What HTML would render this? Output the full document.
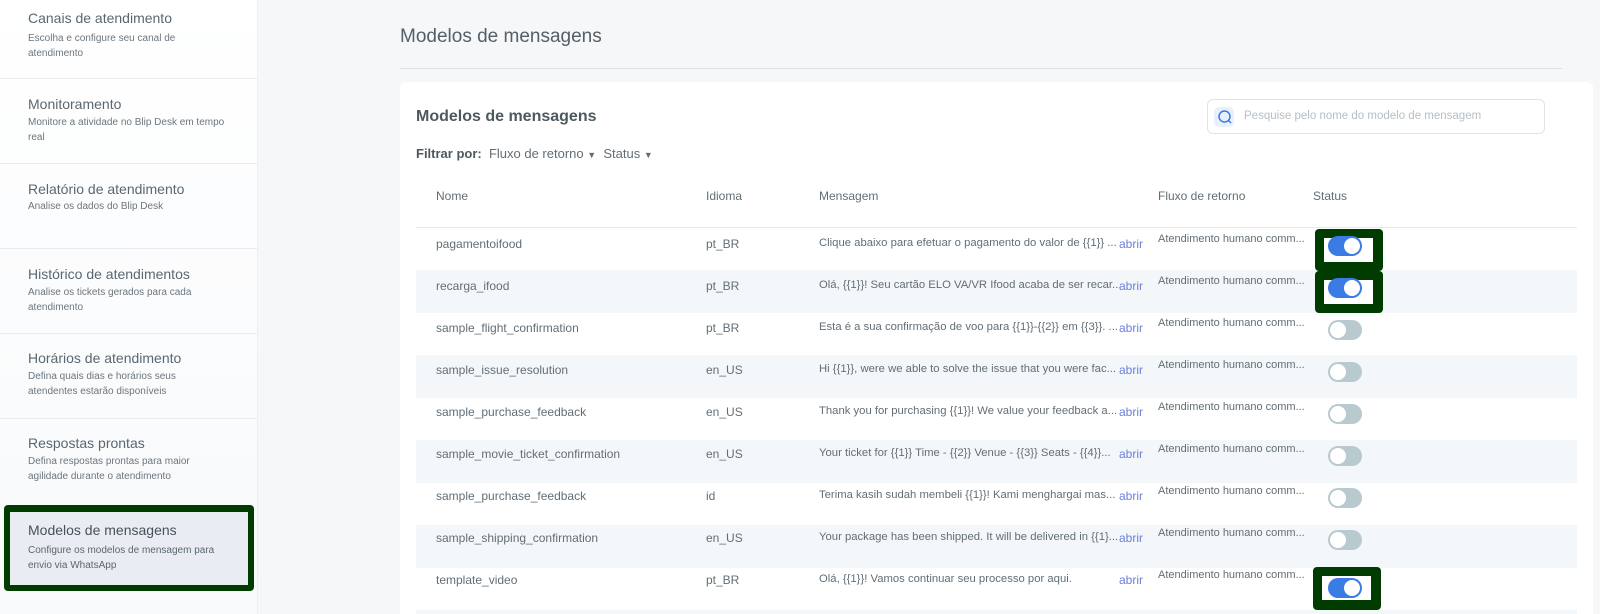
<!DOCTYPE html>
<html><head><meta charset="utf-8"><style>
*{margin:0;padding:0;box-sizing:border-box}
html,body{width:1600px;height:614px;overflow:hidden}
body{background:#f5f7f9;font-family:"Liberation Sans",sans-serif;color:#5f6b73;position:relative}
.sb{position:absolute;left:0;top:0;width:258px;height:614px;background:linear-gradient(#ffffff,#f7f9fb);border-right:1px solid #eef1f3;overflow:hidden}
.it{position:absolute;left:0;width:258px;height:85px;border-bottom:1px solid #e8ecef}
.it h3{position:absolute;left:28px;top:10px;font-size:14px;font-weight:normal;color:#5b6770;white-space:nowrap}
.it p{position:absolute;left:28px;top:31px;font-size:10px;line-height:15px;color:#6b767e;white-space:nowrap}
.sel{position:absolute;left:4px;top:505px;width:250px;height:86px;background:#003b00;border-radius:4px}
.sel div{position:absolute;left:6px;top:7px;right:6px;bottom:6px;background:#e9ecf3}
.sel h3{position:absolute;left:18px;top:10px;font-size:14px;font-weight:normal;color:#48525a}
.sel p{position:absolute;left:18px;top:31px;font-size:10px;line-height:15px;color:#5b666e}
.pt{position:absolute;left:400px;top:26px;font-size:19px;color:#555f66}
.ln{position:absolute;left:400px;top:68px;width:1162px;height:1px;background:#dde2e6}
.card{position:absolute;left:400px;top:82px;width:1193px;height:532px;background:#fff;border-radius:6px 6px 0 0}
.t{position:absolute;font-size:12px;color:#626e76;white-space:nowrap}
.m{font-size:11.3px}
.f{font-size:11px}
.row{position:absolute;left:416px;width:1161px;height:42.5px}
.g{background:#f4f7f9}
.tg{position:absolute;left:1328px;width:34px;height:20px;border-radius:10px;background:#b9c9d0}
.tg::after{content:"";position:absolute;left:2px;top:2px;width:16px;height:16px;border-radius:50%;background:#fff}
.tg.on{background:#3b7be6}
.tg.on::after{left:16px}
.bx{position:absolute;left:1315px;width:68px;height:42px;background:#003b00;border-radius:4px}
.bx div{position:absolute;left:9px;top:9px;width:49px;height:24px;background:#fff}
.a{color:#6b7fd8}
</style></head><body>
<div class="sb">
<div class="it" style="top:-6px"><h3 style="top:16px">Canais de atendimento</h3><p style="top:37px">Escolha e configure seu canal de<br>atendimento</p></div>
<div class="it" style="top:79px"><h3 style="top:17px">Monitoramento</h3><p style="top:36px">Monitore a atividade no Blip Desk em tempo<br>real</p></div>
<div class="it" style="top:164px"><h3 style="top:17px">Relatório de atendimento</h3><p style="top:35px">Analise os dados do Blip Desk</p></div>
<div class="it" style="top:249px"><h3 style="top:17px">Histórico de atendimentos</h3><p style="top:36px">Analise os tickets gerados para cada<br>atendimento</p></div>
<div class="it" style="top:334px"><h3 style="top:16px">Horários de atendimento</h3><p style="top:35px">Defina quais dias e horários seus<br>atendentes estarão disponíveis</p></div>
<div class="it" style="top:419px;border:none"><h3 style="top:16px">Respostas prontas</h3><p style="top:35px">Defina respostas prontas para maior<br>agilidade durante o atendimento</p></div>
</div>
<div class="sel"><div><h3>Modelos de mensagens</h3><p>Configure os modelos de mensagem para<br>envio via WhatsApp</p></div></div>
<div class="pt">Modelos de mensagens</div>
<div class="ln"></div>
<div class="card"></div>
<div class="t" style="left:416px;top:108px;font-size:16px;font-weight:bold;color:#4e585f">Modelos de mensagens</div>
<div style="position:absolute;left:1207px;top:99px;width:338px;height:35px;border:1px solid #dfe4e8;border-radius:6px;background:#fff"></div>
<div style="position:absolute;left:1214px;top:107px;width:20px;height:20px;border-radius:5px;background:#e8f0fc"></div>
<svg style="position:absolute;left:1217px;top:109px" width="16" height="16" viewBox="0 0 16 16"><circle cx="7.5" cy="7.5" r="5.5" fill="none" stroke="#3b7be6" stroke-width="1.5"/><path d="M11.5 11.5L14 14" stroke="#3b7be6" stroke-width="1.5"/></svg>
<div class="t" style="left:1244px;top:110px;color:#b5bfc6;font-size:11.5px">Pesquise pelo nome do modelo de mensagem</div>
<div class="t" style="left:416px;top:146px;font-size:13px"><b style="color:#4e585f">Filtrar por:</b>&nbsp; Fluxo de retorno <span style="font-size:9px">▼</span>&nbsp; Status <span style="font-size:9px">▼</span></div>
<div class="t" style="left:436px;top:189px">Nome</div>
<div class="t" style="left:706px;top:189px">Idioma</div>
<div class="t" style="left:819px;top:189px">Mensagem</div>
<div class="t" style="left:1158px;top:189px">Fluxo de retorno</div>
<div class="t" style="left:1313px;top:189px">Status</div>
<div style="position:absolute;left:416px;top:227px;width:1161px;height:1px;background:#e3e8ec"></div>

<div class="row g" style="top:270px"></div>
<div class="row g" style="top:355px"></div>
<div class="row g" style="top:440px"></div>
<div class="row g" style="top:525px"></div>
<div class="row g" style="top:610px;height:4px"></div>

<div class="t" style="left:436px;top:237px">pagamentoifood</div><div class="t" style="left:706px;top:237px">pt_BR</div><div class="t m" style="left:819px;top:237px">Clique abaixo para efetuar o pagamento do valor de {{1}} ...</div><div class="t f" style="left:1158px;top:233px">Atendimento humano comm...</div>
<div class="t" style="left:436px;top:279px">recarga_ifood</div><div class="t" style="left:706px;top:279px">pt_BR</div><div class="t m" style="left:819px;top:279px">Olá, {{1}}! Seu cartão ELO VA/VR Ifood acaba de ser recar...</div><div class="t f" style="left:1158px;top:275px">Atendimento humano comm...</div>
<div class="t" style="left:436px;top:321px">sample_flight_confirmation</div><div class="t" style="left:706px;top:321px">pt_BR</div><div class="t m" style="left:819px;top:321px">Esta é a sua confirmação de voo para {{1}}-{{2}} em {{3}}. ...</div><div class="t f" style="left:1158px;top:317px">Atendimento humano comm...</div>
<div class="t" style="left:436px;top:363px">sample_issue_resolution</div><div class="t" style="left:706px;top:363px">en_US</div><div class="t m" style="left:819px;top:363px">Hi {{1}}, were we able to solve the issue that you were fac...</div><div class="t f" style="left:1158px;top:359px">Atendimento humano comm...</div>
<div class="t" style="left:436px;top:405px">sample_purchase_feedback</div><div class="t" style="left:706px;top:405px">en_US</div><div class="t m" style="left:819px;top:405px">Thank you for purchasing {{1}}! We value your feedback a...</div><div class="t f" style="left:1158px;top:401px">Atendimento humano comm...</div>
<div class="t" style="left:436px;top:447px">sample_movie_ticket_confirmation</div><div class="t" style="left:706px;top:447px">en_US</div><div class="t m" style="left:819px;top:447px">Your ticket for {{1}} Time - {{2}} Venue - {{3}} Seats - {{4}}...</div><div class="t f" style="left:1158px;top:443px">Atendimento humano comm...</div>
<div class="t" style="left:436px;top:489px">sample_purchase_feedback</div><div class="t" style="left:706px;top:489px">id</div><div class="t m" style="left:819px;top:489px">Terima kasih sudah membeli {{1}}! Kami menghargai mas...</div><div class="t f" style="left:1158px;top:485px">Atendimento humano comm...</div>
<div class="t" style="left:436px;top:531px">sample_shipping_confirmation</div><div class="t" style="left:706px;top:531px">en_US</div><div class="t m" style="left:819px;top:531px">Your package has been shipped. It will be delivered in {{1}...</div><div class="t f" style="left:1158px;top:527px">Atendimento humano comm...</div>
<div class="t" style="left:436px;top:573px">template_video</div><div class="t" style="left:706px;top:573px">pt_BR</div><div class="t m" style="left:819px;top:573px">Olá, {{1}}! Vamos continuar seu processo por aqui.</div><div class="t f" style="left:1158px;top:569px">Atendimento humano comm...</div>

<div class="t a" style="left:1119px;top:237px">abrir</div>
<div class="t a" style="left:1119px;top:279px">abrir</div>
<div class="t a" style="left:1119px;top:321px">abrir</div>
<div class="t a" style="left:1119px;top:363px">abrir</div>
<div class="t a" style="left:1119px;top:405px">abrir</div>
<div class="t a" style="left:1119px;top:447px">abrir</div>
<div class="t a" style="left:1119px;top:489px">abrir</div>
<div class="t a" style="left:1119px;top:531px">abrir</div>
<div class="t a" style="left:1119px;top:573px">abrir</div>

<div class="bx" style="top:229px"><div></div></div>
<div class="bx" style="top:271px"><div></div></div>
<div class="bx" style="top:567px;left:1313px;height:43px"><div></div></div>
<div class="tg on" style="top:236px"></div>
<div class="tg on" style="top:278px"></div>
<div class="tg" style="top:320px"></div>
<div class="tg" style="top:362px"></div>
<div class="tg" style="top:404px"></div>
<div class="tg" style="top:446px"></div>
<div class="tg" style="top:488px"></div>
<div class="tg" style="top:530px"></div>
<div class="tg on" style="top:578px"></div>
</body></html>
